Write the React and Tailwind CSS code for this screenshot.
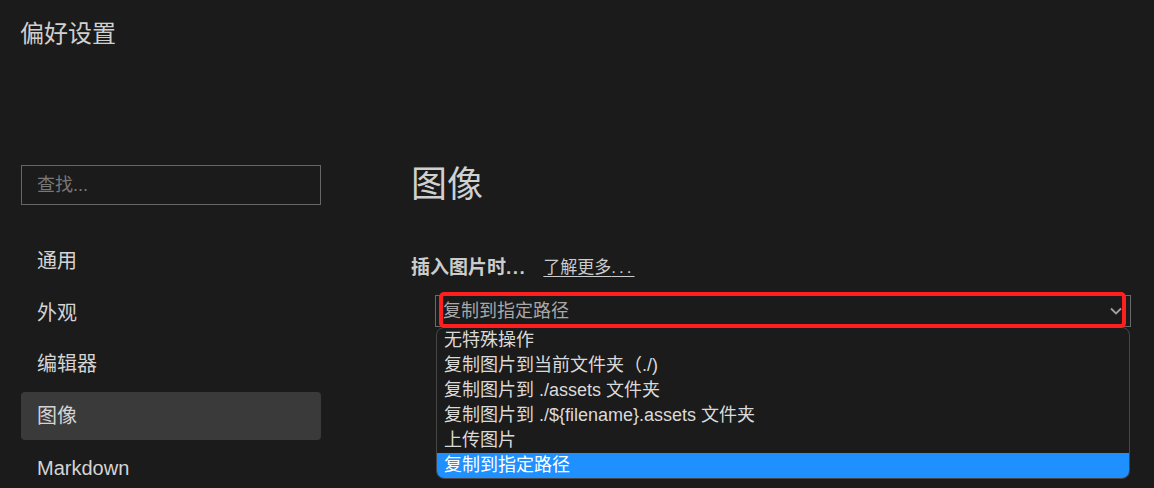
import React from 'react';

const navItems = ['通用', '外观', '编辑器', '图像', 'Markdown'];

const options = [
    '无特殊操作',
    '复制图片到当前文件夹（./)',
    '复制图片到 ./assets 文件夹',
    '复制图片到 ./${filename}.assets 文件夹',
    '上传图片',
    '复制到指定路径',
];

const App = () => {
    const active = '图像';
    const selected = '复制到指定路径';

    return (
        <div className="min-h-screen bg-[#1b1b1b] text-[#cccccc] font-['Liberation_Sans','Noto_Sans_CJK_SC',sans-serif]">
            {/* 标题 */}
            <div className="h-[161px] pt-[18px] pl-[20px]">
                <div className="text-[24px] leading-[32px] text-[#d0d0d0]">偏好设置</div>
            </div>

            <div className="flex">
                {/* 侧边栏 */}
                <div className="w-[300px] ml-[21px] pt-[4px] shrink-0">
                    <div className="h-[40px] border border-[#666666] px-[15px] flex items-center">
                        <span className="text-[18px] text-[#777777]">查找...</span>
                    </div>
                    <div className="mt-[32px] flex flex-col gap-[3.7px]">
                        {navItems.map(item => (
                            <div
                                key={item}
                                className={
                                    item === active
                                        ? 'h-[48px] px-[16px] flex items-center rounded-[4px] bg-[#3a3a3a] text-[20px] text-[#d4d4d4]'
                                        : 'h-[48px] px-[16px] flex items-center rounded-[4px] text-[20px] text-[#d4d4d4]'
                                }
                            >
                                {item}
                            </div>
                        ))}
                    </div>
                </div>

                {/* 内容 */}
                <div className="ml-[90px] flex-1">
                    <h1 className="text-[36px] leading-[48px] text-[#d0d0d0]">图像</h1>

                    <div className="mt-[45px] flex items-center leading-[28px]">
                        <span className="text-[19px] font-bold text-[#cccccc]">
                            插入图片时<span className="tracking-[1.5px]">...</span>
                        </span>
                        <a className="ml-[17px] text-[17px] text-[#cccccc] underline underline-offset-[3px]">
                            了解更多<span className="tracking-[3px]">...</span>
                        </a>
                    </div>

                    <div className="mt-[13px] ml-[24px] relative w-[696px]">
                        <div className="h-[32px] border border-[#6a6a6a] flex items-center justify-between pl-[7px] pr-[8px]">
                            <span className="text-[18px] text-[#a8a8a8]">{selected}</span>
                            <svg width="12" height="8" viewBox="0 0 12 8" fill="none">
                                <path d="M1 1.5 L6 6.5 L11 1.5" stroke="#a0a0a0" strokeWidth="1.8" />
                            </svg>
                        </div>

                        {/* 下拉列表 */}
                        <div className="ml-[1px] w-[694px] border border-[#474747] rounded-[8px] overflow-hidden">
                            {options.map(opt => (
                                <div
                                    key={opt}
                                    className={
                                        opt === selected
                                            ? 'h-[25px] px-[7px] flex items-center text-[18px] bg-[#1e90ff] text-white'
                                            : 'h-[25px] px-[7px] flex items-center text-[18px] text-[#dadada]'
                                    }
                                >
                                    {opt}
                                </div>
                            ))}
                        </div>

                        {/* 标注框 */}
                        <div className="absolute left-[4px] top-[-3px] w-[687px] h-[36px] border-4 border-[#ff1f1f] rounded-[5px] pointer-events-none" />
                    </div>
                </div>
            </div>
        </div>
    );
};

export default App;
